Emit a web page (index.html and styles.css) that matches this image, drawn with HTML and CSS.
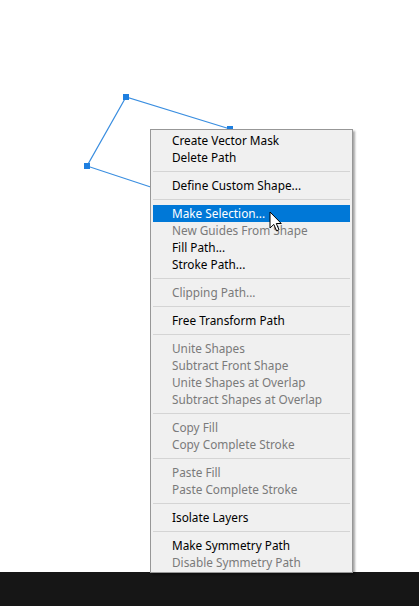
FILE: index.html
```html
<!DOCTYPE html>
<html>
<head>
<meta charset="utf-8">
<link rel="stylesheet" href="styles.css">
</head>
<body>
<div class="app">
  <div class="stage">
    <svg class="path" width="419" height="572" viewBox="0 0 419 572">
      <polyline points="230,129 126,97 87,166 190,200" fill="none" stroke="#3a8ee0" stroke-width="1.2"/>
      <rect x="123" y="94" width="6" height="6" fill="#1e7fe0"/>
      <rect x="84" y="163" width="6" height="6" fill="#1e7fe0"/>
      <rect x="227" y="126" width="6" height="6" fill="#1e7fe0"/>
    </svg>
    <div class="menu">
      <div class="item">Create Vector Mask</div>
      <div class="item">Delete Path</div>
      <div class="sep"></div>
      <div class="item">Define Custom Shape...</div>
      <div class="sep"></div>
      <div class="item active">Make Selection...</div>
      <div class="item off">New Guides From Shape</div>
      <div class="item">Fill Path...</div>
      <div class="item">Stroke Path...</div>
      <div class="sep"></div>
      <div class="item off">Clipping Path...</div>
      <div class="sep"></div>
      <div class="item">Free Transform Path</div>
      <div class="sep"></div>
      <div class="item off">Unite Shapes</div>
      <div class="item off">Subtract Front Shape</div>
      <div class="item off">Unite Shapes at Overlap</div>
      <div class="item off">Subtract Shapes at Overlap</div>
      <div class="sep"></div>
      <div class="item off">Copy Fill</div>
      <div class="item off">Copy Complete Stroke</div>
      <div class="sep"></div>
      <div class="item off">Paste Fill</div>
      <div class="item off">Paste Complete Stroke</div>
      <div class="sep"></div>
      <div class="item">Isolate Layers</div>
      <div class="sep"></div>
      <div class="item">Make Symmetry Path</div>
      <div class="item off">Disable Symmetry Path</div>
    </div>
    <svg class="cursor" width="14" height="22" viewBox="0 0 14 22">
      <path d="M1 1 L1 17 L4.8 13.4 L7.6 19.8 L10 18.8 L7.3 12.5 L12.3 12.5 Z" fill="#fff" stroke="#000" stroke-width="1" stroke-linejoin="miter"/>
    </svg>
  </div>
  <div class="bar"></div>
</div>
</body>
</html>
```
FILE: styles.css
```css
html, body {
  margin: 0;
  padding: 0;
  background: #ffffff;
}
.app {
  width: 419px;
  height: 606px;
  display: flex;
  flex-direction: column;
  overflow: hidden;
}
.stage {
  position: relative;
  flex: 1;
  background: #ffffff;
}
.bar {
  height: 34px;
  background: #161616;
}
.path {
  position: absolute;
  left: 0;
  top: 0;
}
.menu {
  position: absolute;
  left: 150px;
  top: 129px;
  width: 197px;
  padding: 2px 2px 1px 2px;
  background: #f0f0f0;
  border: 1px solid #979797;
  box-shadow: 2px 2px 2px rgba(0, 0, 0, 0.35);
  font-family: "Noto Sans", "DejaVu Sans", sans-serif;
  font-size: 11.8px;
  color: #000;
  z-index: 2;
}
.item {
  height: 17px;
  line-height: 17px;
  padding-left: 19px;
  white-space: nowrap;
}
.item.off {
  color: #7a7a7a;
}
.item.active {
  background: #0078d7;
  color: #ffffff;
}
.sep {
  height: 1px;
  margin: 5px 0;
  background: #d4d4d4;
}
.cursor {
  position: absolute;
  left: 269px;
  top: 211px;
  z-index: 3;
}
```
